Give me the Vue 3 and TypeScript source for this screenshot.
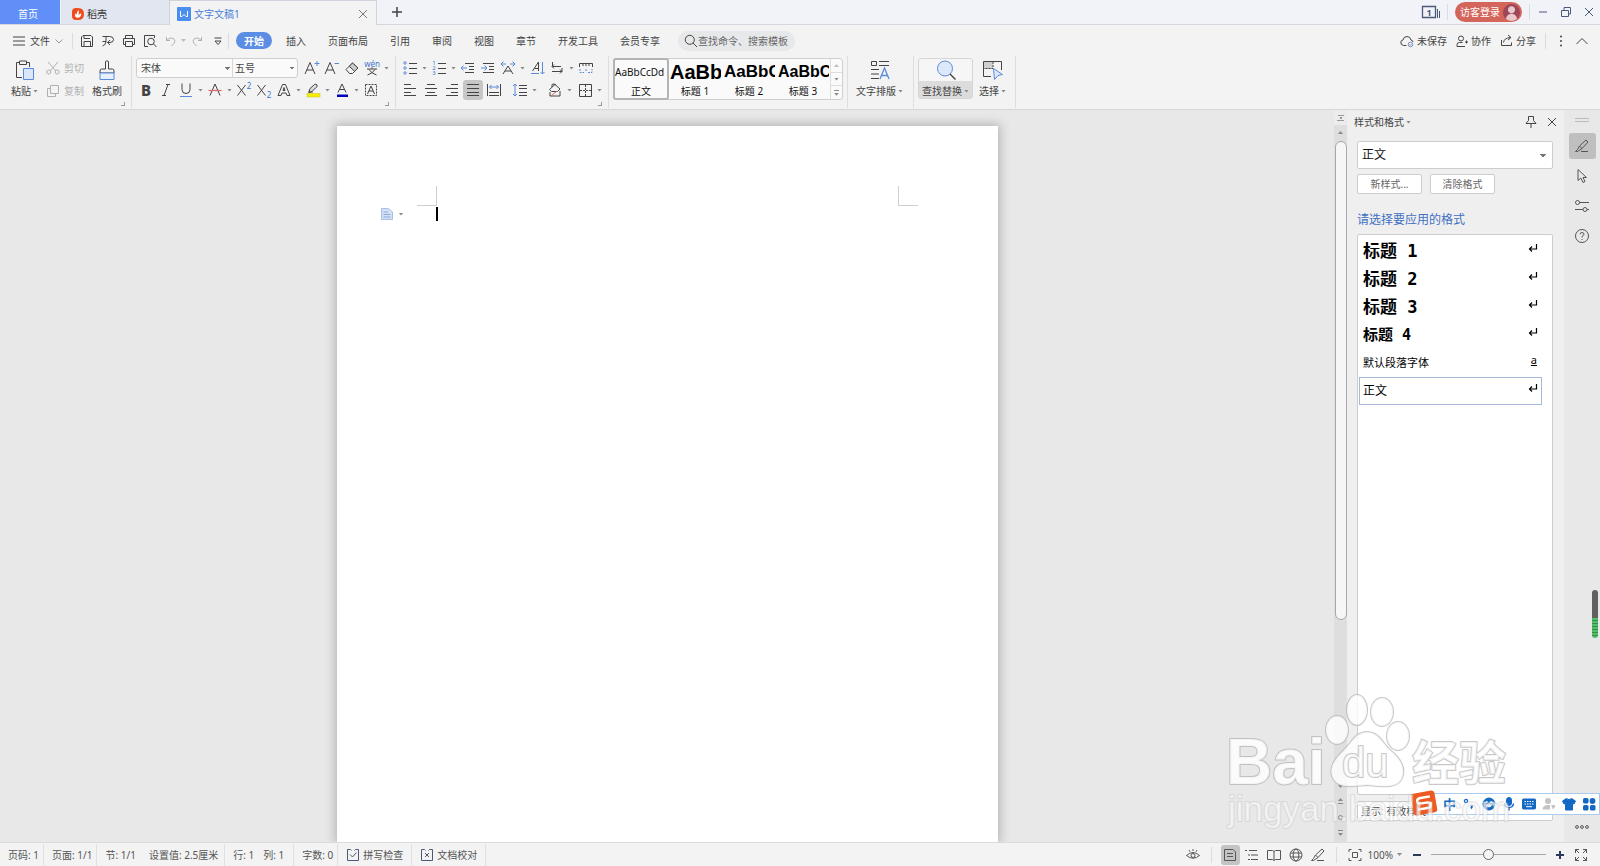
<script setup lang="ts">
import { h, ref } from 'vue'
import type { FunctionalComponent } from 'vue'

const B = '#5b8ad8'
const lines = (rows: Array<[number, number, number]>): string =>
  rows.map(([x1, x2, y]) => `<path d="M${x1} ${y}H${x2}"/>`).join('')
const letter = (t: string, x: number, y: number, size: number, extra = ''): string =>
  `<text x="${x}" y="${y}" font-size="${size}" stroke="none" fill="currentColor" text-anchor="middle" font-family="Noto Sans, sans-serif" ${extra}>${t}</text>`

// Every glyph is drawn in a square box: [box size, markup]
const icons: Record<string, [number, string]> = {
  docer: [12, `<path d="M0 4Q0 0 4 0H6Q12 0 12 6T6 12H4Q0 12 0 8Z" fill="#f04a1d" stroke="none"/><path d="M6.5 2Q4.5 4 4.6 6.5L3.4 5.2Q2 9.6 5.6 9.8Q9 9.6 9.4 5.4Q7.6 5.2 6.5 7Q7.4 4 6.5 2Z" fill="#fff" stroke="none"/>`],
  writer: [14, `<rect width="14" height="14" rx="1" fill="#4a8ef0" stroke="none"/><path d="M3.500 4V9.500H5L7 7.500L9 9.500H10.500V4" stroke="#fff"/>`],
  close: [12, `<path d="M2 2L10 10M10 2L2 10"/>`],
  plus: [12, `<path d="M6 1V11M1 6H11" stroke-width="1.5"/>`],
  minus: [12, `<path d="M2 6H10"/>`],
  restore: [12, `<path d="M1.5 4.5H8.5V10.5H1.5ZM4 4V1.5H10.5V8H9"/>`],
  windows: [18, `<path d="M.5 3.500H13.500V14.500H.5Z" stroke-width="1.300"/><path d="M15.500 6V15M17.500 8V15" />${letter('1', 7, 12.5, 9, 'font-weight="700"')}`],
  burger: [12, lines([[0, 12, 2], [0, 12, 6], [0, 12, 10]])],
  down: [8, `<path d="M.5 2.500L4 6L7.500 2.500"/>`],
  up: [12, `<path d="M.5 9L6 3.500L11.500 9"/>`],
  save: [14, `<path d="M1.500 12.500V3L3 1.500H11L12.500 3V12.500Z"/><path d="M4 1.500V4.500H10M4 12.500V7.500H10.500V12.500"/>`],
  output: [14, `<path d="M1.500 2.500H8.500Q12.500 2.500 12.500 5.500T9 8.500H6.500M9 6L6.500 8.500L9 11M5 3V7.500Q5 11 1.500 12M1.500 7.500H5"/>`],
  print: [14, `<path d="M3.500 4.500V1.500H10.500V4.500M3.500 10.500H1.500V4.500H12.500V10.500H10.500M3.500 7.500H10.500V12.500H3.500Z"/>`],
  preview: [14, `<path d="M5 12.500H1.500V1.500H11.500V4"/><circle cx="8" cy="7.500" r="3.300"/><path d="M10.500 10L13.500 13"/>`],
  undo: [12, `<path d="M1.500 2V5.500H5M1.500 5.500Q5 1.500 8.500 3.500Q11 5.500 9 8.500L6.500 11"/>`],
  redo: [12, `<path d="M10.500 2V5.500H7M10.500 5.500Q7 1.500 3.500 3.500Q1 5.500 3 8.500L5.500 11"/>`],
  more: [10, `<path d="M1.500 2H8.500M2 5H8L5 8.500Z"/>`],
  search: [14, `<circle cx="5.800" cy="5.800" r="4.500"/><path d="M9 9L13 13"/>`],
  cloud: [14, `<path d="M6.500 11.500H3.500Q.5 11 .8 8Q1.200 6 3 6Q3.500 2.500 7 2.500Q10.500 2.500 11 6Q13 6.500 13 8"/><circle cx="10.500" cy="10.500" r="2.300" stroke="#8090b8"/><path d="M9.500 10.500L10.300 11.300L11.600 9.900" stroke="#8090b8"/>`],
  people: [12, `<circle cx="5" cy="3.500" r="2.500"/><path d="M1 11.500V9.500Q1 7.500 3.500 7.500H6.500M1 11.500H9M10.500 5.500V8.500M9 7H12"/>`],
  share: [13, `<path d="M1.500 6V11.500H11.500V8.500M3.500 8.500Q4 4 10.500 3.500M8 1L11 3.500L8 6"/>`],
  dots: [12, `<g fill="currentColor" stroke="none"><circle cx="6" cy="1.500" r="1"/><circle cx="6" cy="6" r="1"/><circle cx="6" cy="10.500" r="1"/></g>`],
  paste: [20, `<path d="M7 17.500H1.500V2.500H4.500M11.500 2.500H14.500V7"/><path d="M4.500 1H11.500V4.500H4.500Z"/><path d="M8.500 8.500H18.500V19.500H8.500Z" fill="#d9e6fb" stroke="${B}"/>`],
  cut: [14, `<path d="M2 1L10 10M12 1L4 10"/><circle cx="2.800" cy="11" r="2"/><circle cx="11.200" cy="11" r="2"/>`],
  copy: [14, `<path d="M4.500 1.500H12.500V9.500H4.500ZM4 4.500H1.500V12.500H9.500V10"/>`],
  painter: [20, `<path d="M8.500 9V1.500Q10 0 11.500 1.500V9H15.500Q17 9 17 11V13H3V11Q3 9 4.500 9Z"/><path d="M3 13H17V19.500H3Z" stroke="${B}" fill="#e8f0fd"/>`],
  grow: [16, `<path d="M1 14L6 2.500L11 14M2.800 10H9.200"/><path d="M13 1V6M10.500 3.500H15.500" stroke="${B}"/>`],
  shrink: [16, `<path d="M1 14L6 2.500L11 14M2.800 10H9.200"/><path d="M10.500 3.500H15" stroke="${B}"/>`],
  eraser: [16, `<path d="M2 9.500L8.500 3L14 8L8.500 13.500H5.500Z"/><path d="M5.200 6.300L10.700 11.300L14 8L8.500 3Z" fill="#ccc"/>`],
  pinyin: [16, letter('wén', 8, 6.5, 8, 'style="fill:#3f74cc"') + `<path d="M3 9H13M8 7.500V9M5 9.500Q7 13 12.500 15M11 9.500Q9 13 3.500 15"/>`],
  bold: [16, letter('B', 8, 13.5, 15, 'font-weight="800"')],
  italic: [16, `<path d="M8 2.500H12M4 13.500H8M10 2.500L6 13.500"/>`],
  under: [16, `<path d="M4 1.500V7.500Q4 11.500 8 11.500T12 7.500V1.500"/><path d="M2 14.500H14" stroke="${B}"/>`],
  strike: [16, `<path d="M3 13.500L8 2L13 13.500"/><path d="M1.500 8.500H14.500" stroke="#e06a6a" stroke-width="1.300"/>`],
  sup: [16, `<path d="M1.500 3L9.500 13.500M9.500 3L1.500 13.500"/>` + letter('2', 13, 7, 8, 'style="fill:#3f74cc"')],
  sub: [16, `<path d="M1.500 3L9.500 13.500M9.500 3L1.500 13.500"/>` + letter('2', 13, 15.5, 8, 'style="fill:#3f74cc"')],
  outline: [16, `<path d="M2 13.500L6.500 2.500H9.500L14 13.500H11L10 11H6L5 13.500ZM7 8.500L8 5.500L9 8.500Z"/>`],
  mark: [16, `<path d="M4 10.500L5 6.500L9.500 2.500Q11 1.500 12 3T11 5.500L7 9.500Z" fill="#ddd"/><path d="M3 10H8"/><rect x="2" y="11.500" width="13" height="3.500" fill="#f7ee00" stroke="#c9c020" stroke-width=".5"/>`],
  color: [16, `<path d="M4 10.500L8 2L12 10.500M5.500 7.500H10.500"/><rect x="3" y="12.500" width="11" height="2.500" fill="#0000b8" stroke="none"/>`],
  boxed: [16, `<path d="M2.500 2.500H13.500V13.500H2.500Z" stroke-dasharray="2 1"/><path d="M4.500 12L8 4L11.500 12M6 9H10"/>`],
  bullets: [16, `<g stroke="${B}"><circle cx="3" cy="3" r="1.200"/><circle cx="3" cy="8" r="1.200"/><circle cx="3" cy="13" r="1.200"/></g>` + lines([[7, 15, 3.5], [7, 15, 8.5], [7, 15, 13.5]])],
  numbers: [16, [1, 2, 3].map((n) => letter(String(n), 3, n * 5, 6, 'style="fill:#3f74cc"')).join('') + lines([[7, 15, 3.5], [7, 15, 8.5], [7, 15, 13.5]])],
  outdent: [16, lines([[5, 14, 3.5], [9, 14, 6.5], [9, 14, 9.5], [5, 14, 12.5]]) + `<path d="M1 8H7M3.500 5.500L1 8L3.500 10.500" stroke="${B}"/>`],
  indent: [16, lines([[3, 14, 3.5], [9, 14, 6.5], [9, 14, 9.5], [3, 14, 12.5]]) + `<path d="M1 8H7M4.500 5.500L7 8L4.500 10.500" stroke="${B}"/>`],
  spread: [16, `<path d="M3 14L8 6L13 14M5 11H11"/><path d="M1 4H6M3.500 1.500L1 4L3.500 6.500M10 4H15M12.500 1.500L15 4L12.500 6.500" stroke="${B}"/>`],
  sort: [16, `<path d="M3.500 11L9.500 2V11M5.500 8.500H9.500"/><path d="M2 13.500H10M13.500 2V14M11.500 12L13.500 14L15.500 12" stroke="${B}"/>`],
  tabs: [16, `<path d="M3.500 2V6.500H12M5 4.500L3 6.500L5 8.500M3 11.500H13M11 9.500L13 11.500L11 13.500M13 8V11"/>`],
  ruler: [16, `<path d="M1.500 7V3.500H14.500V7M5 4V6M8 4V6M11 4V6"/><path d="M2 9V12.500H6M10 12.500H14V9M8 9V12" stroke="${B}" stroke-dasharray="2 1"/>`],
  left: [16, lines([[2, 9, 2.5], [2, 14, 6.5], [2, 9, 10.5], [2, 14, 13.5]])],
  center: [16, lines([[4, 12, 2.5], [2, 14, 6.5], [4, 12, 10.5], [2, 14, 13.5]])],
  right: [16, lines([[7, 14, 2.5], [2, 14, 6.5], [7, 14, 10.5], [2, 14, 13.5]])],
  justify: [16, lines([[2, 14, 2.5], [2, 14, 6.5], [2, 14, 10.5], [2, 14, 13.5]])],
  distribute: [16, `<path d="M1.500 2V14M14.500 2V14M3 10.500H13M3 13.500H13"/><path d="M3.500 5H12.500M5.500 3L3.500 5L5.500 7M10.500 3L12.500 5L10.500 7" stroke="${B}"/>`],
  spacing: [16, lines([[7, 15, 3.5], [7, 15, 6.5], [7, 15, 10.5], [7, 15, 13.5]]) + `<path d="M3 2V14M1 4L3 2L5 4M1 12L3 14L5 12" stroke="${B}"/>`],
  fill: [16, `<path d="M2.500 7.500L8 2.500L13 7L10.500 9.500H4.500ZM5 5V2.500Q7 1 9 3"/><path d="M3 10V14H13V9"/><path d="M4 14L10 9" stroke="#d66"/>`],
  border: [16, `<path d="M2.500 2.500H14.500V14.500H2.500Z"/><path d="M8.500 3V14M3 8.500H14" stroke-dasharray="2 1"/>`],
  typeset: [20, `<path d="M1.500 1.500H6.500V5.500H1.500ZM9 1.500H19M9 5.500H19M1 9.500H9M1 14H9M1 18.500H9"/><path d="M10 19L14.500 8L19 19M11.500 15.500H17.500" stroke="${B}" stroke-width="1.300"/>`],
  find: [20, `<circle cx="9" cy="8.500" r="7.500" fill="#dde9fb" stroke="${B}"/><path d="M14 14L19.500 19.500" stroke-width="1.400"/>`],
  select: [20, `<rect x="1" y="2" width="9" height="7" fill="#d0d0d0" stroke="none"/><path d="M8 16.500H.5V1.500H18.500V10"/><path d="M10 2V8.500H1" stroke-dasharray="2 1"/><path d="M10.500 8.500L19.500 14.500L15 15.500L11.500 19.500Z" fill="#dde9fb" stroke="${B}"/>`],
  pin: [14, `<path d="M4.500 1.500H9.500V5.500L12 8.500H2L4.500 5.500ZM7 8.500V13"/>`],
  pen: [16, `<path d="M3.500 11.500L5.500 8L12 2L14 4L8 10.500L3.500 13.500H1.500ZM7 13.500H14M5.500 8L8 10.500"/>`],
  cursor: [16, `<path d="M4 1.500V12.500L6.800 10L9 14.500L11 13.500L9 9.500H12.500Z"/>`],
  sliders: [16, `<circle cx="3.500" cy="4.500" r="2"/><path d="M5.500 4.500H15M1 11.500H9M13 11.500H15"/><circle cx="11" cy="11.500" r="2"/>`],
  help: [16, `<circle cx="8" cy="8" r="6.500"/><path d="M6 6.300Q6.200 4.500 8 4.500T10 6.200Q10 7.200 8 8.500V9.500M8 11V12"/>`],
  ellipsis: [16, `<circle cx="3" cy="8" r="1.400"/><circle cx="8" cy="8" r="1.400"/><circle cx="13" cy="8" r="1.400"/>`],
  grip: [14, lines([[0, 14, 5.5], [0, 14, 8.5]])],
  enter: [10, `<path d="M8.500 1V6H2M4 3.500L1.500 6L4 8.500" stroke-width="1.200"/>`],
  page: [12, `<path d="M.5.500H7.500L11.500 4V11.500H.5Z" fill="#d3e0f5" stroke="#a9bfe4"/><path d="M2.500 4H7M2.500 6.500H9.500M2.500 9H9.500" stroke="#8fabd9"/>`],
  check: [14, `<path d="M5.500 2.500L4.500 1.500H1.500V12.500H12.500V1.500H9.500L8.500 2.500M4 6.500L6.500 9L10.500 4.500" stroke="#4c5878"/>`],
  proof: [14, `<path d="M5.500 2.500L4.500 1.500H1.500V12.500H12.500V1.500H9.500L8.500 2.500M5 5L9 9M9 5L5 9" stroke="#4c5878"/>`],
  eye: [14, `<path d="M.5 7.500Q7 1.500 13.500 7.500Q7 13 .5 7.500ZM7 1V3M3 2L4 3.700M11 2L10 3.700"/><circle cx="7" cy="7.500" r="2"/>`],
  print1: [14, `<path d="M1.500 1.500H10L12.500 4V12.500H1.500ZM4 5.500H10M4 8.500H10"/>`],
  outline1: [14, lines([[0, 2, 2.5], [4, 12, 2.5], [3, 5, 7], [6, 13, 7], [3, 5, 11.5], [6, 13, 11.5]])],
  book: [14, `<path d="M.5 2.500H5.500L7 3.500L8.500 2.500H13.500V11.500H8.500L7 12.500L5.500 11.500H.5ZM7 3.500V12.500"/>`],
  globe: [14, `<circle cx="7" cy="7" r="6"/><ellipse cx="7" cy="7" rx="2.800" ry="6"/><path d="M1.500 5H12.500M1.500 9H12.500"/>`],
  fit: [14, `<path d="M1 4V1.500H3.500M10.500 1.500H13V4M13 10V12.500H10.500M3.500 12.500H1V10M4.500 4.500H9.500V9.500H4.500Z"/>`],
  full: [14, `<path d="M1.500 5V1.500H5M1.500 1.500L5 5M9 1.500H12.500V5M12.500 1.500L9 5M12.500 9V12.500H9M12.500 12.500L9 9M5 12.500H1.500V9M1.500 12.500L5 9"/>`],
  punct: [14, `<circle cx="4" cy="4" r="1.600" stroke-width="1.300"/><path d="M9.500 8.500Q10.500 10 9 11.500" stroke-width="2"/>`],
  smile: [14, `<circle cx="7" cy="7" r="6" fill="currentColor"/><path d="M3.500 7.500Q7 13 10.500 7.500Z" fill="#fff" stroke="none"/><circle cx="4.800" cy="5" r="1" fill="#fff" stroke="none"/><circle cx="9.200" cy="5" r="1" fill="#fff" stroke="none"/>`],
  mic: [14, `<rect x="4.500" y=".5" width="5" height="8" rx="2.500" fill="currentColor"/><path d="M2.500 6.500Q3 10.500 7 10.500T11.500 6.500M7 10.500V13.500" stroke-width="1.500"/>`],
  keyboard: [14, `<rect x=".5" y="2" width="13" height="10" rx="1" fill="currentColor"/><path d="M2.500 4.500H11.500M2.500 7H11.500" stroke="#fff" stroke-dasharray="1.500 1"/><path d="M4 9.700H10" stroke="#fff"/>`],
  person: [14, `<circle cx="6" cy="4" r="3" fill="currentColor" stroke="none"/><path d="M.5 12.500Q.5 8 6 8H8V12.500ZM9 8H13V10L11 12.500" fill="currentColor" stroke="none"/>`],
  shirt: [14, `<path d="M4.500 1.500Q7 4 9.500 1.500L13.500 4L12 7L10.500 6.500V13H3.500V6.500L2 7L.5 4Z" fill="currentColor"/>`],
  grid: [14, `<g fill="currentColor" stroke="none"><rect x="1" y="1" width="5.500" height="5.500" rx="1.500"/><circle cx="10.500" cy="4" r="2.900"/><rect x="1" y="8" width="5.500" height="5.500" rx="1.500"/><rect x="8" y="8" width="5.500" height="5.500" rx="1.500"/></g>`],
  sogou: [26, `<g transform="rotate(-10 13 13)"><rect x="1" y="2" width="24" height="22" rx="3" fill="#ee5a24" stroke="none"/><path d="M20 7.500H10.500Q6.500 7.500 6.500 10.200T10.500 13H15.500Q19.500 13 19.500 15.800T15.500 18.500H6" stroke="#fff" stroke-width="2.400"/></g>`],
}

const Ic: FunctionalComponent<{ n: string }> = (props) => {
  const [size, body] = icons[props.n]
  return h('svg', {
    width: size,
    height: size,
    viewBox: `0 0 ${size} ${size}`,
    fill: 'none',
    stroke: 'currentColor',
    'aria-hidden': 'true',
    innerHTML: body,
  })
}
Ic.props = ['n']

interface Tool { n: string; label: string; arrow?: boolean; on?: boolean; sep?: boolean }

const quick: Tool[] = [
  { n: 'save', label: '保存' },
  { n: 'output', label: '输出' },
  { n: 'print', label: '打印' },
  { n: 'preview', label: '打印预览' },
]
const menus = ['插入', '页面布局', '引用', '审阅', '视图', '章节', '开发工具', '会员专享']
const fontTop: Tool[] = [
  { n: 'grow', label: '增大字号' },
  { n: 'shrink', label: '减小字号' },
  { n: 'eraser', label: '清除格式' },
  { n: 'pinyin', label: '拼音指南', arrow: true },
]
const fontBottom: Tool[] = [
  { n: 'bold', label: '加粗' },
  { n: 'italic', label: '倾斜' },
  { n: 'under', label: '下划线', arrow: true },
  { n: 'strike', label: '删除线', arrow: true },
  { n: 'sup', label: '上标' },
  { n: 'sub', label: '下标' },
  { n: 'outline', label: '文字效果', arrow: true },
  { n: 'mark', label: '突出显示', arrow: true },
  { n: 'color', label: '字体颜色', arrow: true },
  { n: 'boxed', label: '字符底纹' },
]
const paraTop: Tool[] = [
  { n: 'bullets', label: '项目符号', arrow: true },
  { n: 'numbers', label: '编号', arrow: true },
  { n: 'outdent', label: '减少缩进量' },
  { n: 'indent', label: '增加缩进量' },
  { n: 'spread', label: '中文版式', arrow: true },
  { n: 'sort', label: '排序' },
  { n: 'tabs', label: '显示编辑标记', arrow: true },
  { n: 'ruler', label: '制表位' },
]
const paraBottom: Tool[] = [
  { n: 'left', label: '左对齐' },
  { n: 'center', label: '居中对齐' },
  { n: 'right', label: '右对齐' },
  { n: 'justify', label: '两端对齐', on: true },
  { n: 'distribute', label: '分散对齐' },
  { n: 'spacing', label: '行距', arrow: true, sep: true },
  { n: 'fill', label: '底纹颜色', arrow: true, sep: true },
  { n: 'border', label: '边框', arrow: true },
]
const gallery = [
  { sample: 'AaBbCcDd', name: '正文', cls: 's0' },
  { sample: 'AaBb', name: '标题 1', cls: 's1' },
  { sample: 'AaBbC', name: '标题 2', cls: 's2' },
  { sample: 'AaBbCc', name: '标题 3', cls: 's3' },
]
const styles = [
  { name: '标题 1', cls: 'h1' },
  { name: '标题 2', cls: 'h1' },
  { name: '标题 3', cls: 'h1' },
  { name: '标题 4', cls: 'h4' },
  { name: '默认段落字体', cls: 'chr', char: true },
  { name: '正文', cls: 'body' },
]
const side = [
  { n: 'pen', label: '样式和格式' },
  { n: 'cursor', label: '选择' },
  { n: 'sliders', label: '属性' },
  { n: 'help', label: '帮助' },
]
const views = [
  { n: 'print1', label: '页面视图' },
  { n: 'outline1', label: '大纲' },
  { n: 'book', label: '阅读版式' },
  { n: 'globe', label: 'Web版式' },
  { n: 'pen', label: '写作模式' },
]
const ime = ['punct', 'smile', 'mic', 'keyboard', 'person', 'shirt', 'grid']
const picked = ref(5)
const zoom = ref(50)
</script>

<template>
  <div class="app">
    <header class="titlebar">
      <button class="tab home">首页</button>
      <button class="tab docer"><Ic n="docer" />稻壳</button>
      <div class="tab current">
        <Ic n="writer" /><span class="tab-name">文字文稿1</span>
        <button class="plain" aria-label="关闭文稿"><Ic n="close" /></button>
      </div>
      <button class="plain new" aria-label="新建"><Ic n="plus" /></button>
      <div class="window-tools">
        <button class="plain" aria-label="窗口列表"><Ic n="windows" /></button>
        <i class="vline"></i>
        <button class="login">访客登录<span class="avatar"></span></button>
        <i class="vline"></i>
        <button class="plain" aria-label="最小化"><Ic n="minus" /></button>
        <button class="plain" aria-label="还原"><Ic n="restore" /></button>
        <button class="plain" aria-label="关闭"><Ic n="close" /></button>
      </div>
    </header>

    <nav class="menubar">
      <button class="plain file"><Ic n="burger" />文件<Ic n="down" class="faint" /></button>
      <i class="vline"></i>
      <div class="quick">
        <button v-for="q in quick" :key="q.n" class="plain q" :aria-label="q.label"><Ic :n="q.n" /></button>
        <button class="plain q off" aria-label="撤销"><Ic n="undo" /></button>
        <i class="arrow off"></i>
        <button class="plain q off" aria-label="恢复"><Ic n="redo" /></button>
        <button class="plain q" aria-label="自定义"><Ic n="more" /></button>
      </div>
      <i class="vline"></i>
      <button class="start">开始</button>
      <div class="menus">
        <button v-for="m in menus" :key="m" class="plain">{{ m }}</button>
      </div>
      <label class="search"><Ic n="search" /><input type="text" placeholder="查找命令、搜索模板" aria-label="查找命令" /></label>
      <div class="menu-right">
        <button class="plain"><Ic n="cloud" />未保存</button>
        <button class="plain"><Ic n="people" />协作</button>
        <button class="plain"><Ic n="share" />分享</button>
        <i class="vline"></i>
        <button class="plain" aria-label="更多"><Ic n="dots" /></button>
        <button class="plain" aria-label="收起功能区"><Ic n="up" /></button>
      </div>
    </nav>

    <section class="ribbon">
      <div class="group clip">
        <button class="big"><Ic n="paste" /><span>粘贴<i class="arrow"></i></span></button>
        <div class="stack">
          <button class="plain off"><Ic n="cut" />剪切</button>
          <button class="plain off"><Ic n="copy" />复制</button>
        </div>
        <button class="big"><Ic n="painter" /><span>格式刷</span></button>
        <i class="corner"></i>
      </div>
      <div class="group font">
        <div class="row">
          <div class="combos">
            <select class="family" aria-label="字体"><option>宋体</option></select>
            <select class="size" aria-label="字号"><option>五号</option></select>
          </div>
          <button v-for="t in fontTop" :key="t.n" class="tool" :aria-label="t.label">
            <span class="face"><Ic :n="t.n" /></span><i v-if="t.arrow" class="arrow"></i>
          </button>
        </div>
        <div class="row">
          <button v-for="t in fontBottom" :key="t.n" class="tool" :aria-label="t.label">
            <span class="face"><Ic :n="t.n" /></span><i v-if="t.arrow" class="arrow"></i>
          </button>
        </div>
        <i class="corner"></i>
      </div>
      <div class="group para">
        <div class="row">
          <button v-for="t in paraTop" :key="t.n" class="tool" :aria-label="t.label">
            <span class="face"><Ic :n="t.n" /></span><i v-if="t.arrow" class="arrow"></i>
          </button>
        </div>
        <div class="row spaced">
          <template v-for="t in paraBottom" :key="t.n">
            <i v-if="t.sep" class="mini-sep"></i>
            <button class="tool" :class="{ on: t.on }" :aria-label="t.label">
              <span class="face"><Ic :n="t.n" /></span><i v-if="t.arrow" class="arrow"></i>
            </button>
          </template>
        </div>
        <i class="corner"></i>
      </div>
      <div class="group styles">
        <div class="gallery">
          <button v-for="(g, i) in gallery" :key="g.name" class="cell" :class="{ on: i === 0 }">
            <span class="sample" :class="g.cls">{{ g.sample }}</span><span class="cell-name">{{ g.name }}</span>
          </button>
          <div class="steps">
            <button aria-label="上一行"><i class="arrow flip off"></i></button>
            <button aria-label="下一行"><i class="arrow"></i></button>
            <button aria-label="全部样式"><i class="arrow barred"></i></button>
          </div>
        </div>
      </div>
      <div class="group typeset">
        <button class="big"><Ic n="typeset" /><span>文字排版<i class="arrow"></i></span></button>
      </div>
      <div class="group last">
        <button class="big find"><Ic n="find" /><span>查找替换<i class="arrow"></i></span></button>
        <button class="big"><Ic n="select" /><span>选择<i class="arrow"></i></span></button>
      </div>
    </section>

    <div class="work">
      <main class="canvas">
        <article class="sheet">
          <div class="marks"><i class="mark-left"></i><i class="mark-right"></i></div>
          <div class="line">
            <button class="plain para-tool" aria-label="段落布局"><Ic n="page" /><i class="arrow"></i></button>
            <i class="caret"></i>
          </div>
        </article>
      </main>
      <div class="scroll">
        <i class="ruler-toggle"></i>
        <i class="arrow flip"></i>
        <div class="track"><div class="thumb"></div></div>
        <i class="arrow"></i>
        <div class="nav-set"><i class="arrow flip barred"></i><i class="dot"></i><i class="arrow barred"></i></div>
      </div>
      <aside class="panel">
        <div class="panel-head">
          <span>样式和格式<i class="arrow"></i></span>
          <button class="plain" aria-label="固定"><Ic n="pin" /></button>
          <button class="plain" aria-label="关闭面板"><Ic n="close" /></button>
        </div>
        <select class="style-select" aria-label="当前样式"><option>正文</option></select>
        <div class="panel-buttons">
          <button>新样式...</button>
          <button>清除格式</button>
        </div>
        <h2>请选择要应用的格式</h2>
        <div class="list">
          <button
            v-for="(s, i) in styles"
            :key="s.name"
            :class="[s.cls, { picked: picked === i }]"
            @click="picked = i"
          >
            <span>{{ s.name }}</span>
            <u v-if="s.char">a</u>
            <Ic v-else n="enter" />
          </button>
        </div>
        <select class="show-select" aria-label="显示"><option>显示: 有效样式</option></select>
      </aside>
      <div class="side">
        <Ic n="grip" class="grip" />
        <button v-for="(s, i) in side" :key="s.n" :class="{ on: i === 0 }" :aria-label="s.label"><Ic :n="s.n" /></button>
        <button class="side-more" aria-label="更多"><Ic n="ellipsis" /></button>
      </div>
    </div>

    <footer class="status">
      <span class="st cut">页码: 1</span>
      <span class="st cut">页面: 1/1</span>
      <span class="st">节: 1/1</span>
      <span class="st cut setting">设置值: 2.5厘米</span>
      <span class="st near">行: 1</span>
      <span class="st col">列: 1</span>
      <span class="st cut">字数: 0</span>
      <button class="st cut"><Ic n="check" />拼写检查</button>
      <button class="st cut"><Ic n="proof" />文档校对</button>
      <div class="status-right">
        <button class="plain eye" aria-label="护眼模式"><Ic n="eye" /></button>
        <i class="vline"></i>
        <div class="views">
          <button v-for="(v, i) in views" :key="v.n" class="plain" :class="{ on: i === 0 }" :aria-label="v.label"><Ic :n="v.n" /></button>
        </div>
        <i class="vline"></i>
        <button class="plain fit" aria-label="适合页宽"><Ic n="fit" /></button>
        <button class="plain percent">100%<i class="arrow"></i></button>
        <button class="plain sign" aria-label="缩小"><svg width="10" height="10"><path d="M1 5H9" stroke="currentColor" stroke-width="2" /></svg></button>
        <input v-model="zoom" type="range" min="0" max="100" aria-label="显示比例" />
        <button class="plain sign" aria-label="放大"><svg width="10" height="10"><path d="M1 5H9M5 1V9" stroke="currentColor" stroke-width="2" /></svg></button>
        <button class="plain" aria-label="全屏"><Ic n="full" /></button>
      </div>
    </footer>

    <div class="meter"></div>
    <div class="ime">
      <Ic n="sogou" class="ime-logo" />
      <b>中</b>
      <Ic v-for="i in ime" :key="i" :n="i" :class="{ grey: i === 'person' }" />
    </div>
    <svg class="watermark" width="300" height="150" viewBox="0 0 300 150" aria-hidden="true">
      <g class="wm">
        <text x="6" y="94" class="wm-bai">Bai</text>
        <ellipse cx="117" cy="40" rx="11" ry="14" />
        <ellipse cx="137" cy="20" rx="10" ry="15" />
        <ellipse cx="162" cy="22" rx="11" ry="14" />
        <ellipse cx="178" cy="46" rx="11" ry="14" />
        <path d="M147 42C158 42 162 52 170 60C180 68 186 78 182 88C178 98 166 97 147 95C128 97 116 98 112 86C109 76 116 68 124 60C132 52 136 42 147 42Z" />
        <text x="122" y="87" class="wm-du">du</text>
        <text x="192" y="90" class="wm-cn">经验</text>
        <text x="8" y="131" class="wm-url">jingyan.baidu.com</text>
      </g>
    </svg>
  </div>
</template>

<style>
html,
body {
  margin: 0;
  overflow: hidden;
}
</style>

<style scoped>
.app {
  position: relative;
  display: flex;
  flex-direction: column;
  height: 100vh;
  background: #f3f3f3;
  color: #444;
  font: 10px/14px 'Noto Sans', 'Noto Sans CJK SC', sans-serif;
}
.app *,
.app *::before,
.app *::after {
  box-sizing: border-box;
}
button,
select,
input {
  margin: 0;
  padding: 0;
  border: 0;
  background: none;
  color: inherit;
  font: inherit;
  white-space: nowrap;
}
select {
  appearance: none;
  background-image: conic-gradient(from -45deg at 50% 100%, #777 90deg, transparent 0);
  background-repeat: no-repeat;
  background-size: 6px 3px;
  background-position: right 2px center;
}
svg {
  flex: none;
  overflow: visible;
}
.plain {
  display: flex;
  align-items: center;
  justify-content: center;
}
.vline {
  flex: none;
  width: 1px;
  height: 16px;
  background: #dcdcdc;
}
.arrow {
  flex: none;
  display: inline-block;
  width: 9px;
  height: 3px;
}
.arrow::before {
  content: '';
  display: block;
  width: 5px;
  height: 3px;
  margin: 0 auto;
  background: #8a8a8a;
  clip-path: polygon(0 0, 100% 0, 50% 100%);
}
.arrow.flip::before {
  transform: rotate(180deg);
}
.arrow.barred {
  width: 5px;
  height: 6px;
  padding-top: 2px;
  border-top: 1px solid #8a8a8a;
}
.arrow.flip.barred {
  padding-top: 0;
  border-top: 0;
  border-bottom: 1px solid #8a8a8a;
}
.off {
  color: #b0b0b0;
}
.arrow.off {
  opacity: 0.5;
}

.titlebar {
  flex: none;
  display: flex;
  align-items: center;
  height: 25px;
  background: #f1f3f9;
  border-bottom: 1px solid #d4d7de;
}
.tab {
  display: flex;
  align-items: center;
  height: 24px;
}
.home {
  width: 60px;
  padding: 3px 4px 0 0;
  justify-content: center;
  background: #5f8ff7;
  color: #fff;
}
.docer {
  width: 108px;
  margin-left: 1px;
  padding: 3px 0 0 11px;
  gap: 3px;
  background: #e2e6f0;
  color: #333;
}
.current {
  align-self: flex-start;
  width: 208px;
  height: 25px;
  padding: 2px 7px 0;
  gap: 3px;
  background: #f3f3f3;
  border: 1px solid #cfd3dc;
  border-bottom: 0;
  color: #4a80d8;
}
.tab-name {
  flex: 1;
}
.current .plain {
  color: #777;
}
.new {
  margin-left: 14px;
}
.window-tools {
  display: flex;
  align-items: center;
  gap: 11px;
  margin-left: auto;
  padding-right: 5px;
  color: #4c5878;
}
.window-tools .vline {
  margin: 0 -4px;
}
.login {
  display: flex;
  align-items: center;
  gap: 3px;
  height: 20px;
  padding: 0 2px 0 5px;
  border-radius: 10px;
  background: #d4655b;
  color: #fff;
}
.avatar {
  width: 17px;
  height: 17px;
  border-radius: 50%;
  background:
    radial-gradient(circle at 50% 34%, #e8c8cc 3px, transparent 4px),
    radial-gradient(circle at 50% 90%, #e8c8cc 5px, transparent 6px),
    #9c4658;
}

.menubar {
  flex: none;
  display: flex;
  align-items: center;
  height: 31px;
  padding: 0 6px 0 13px;
}
.file {
  gap: 5px;
  width: 59px;
  justify-content: flex-start;
}
.faint {
  color: #999;
}
.quick {
  display: flex;
  align-items: center;
  padding-left: 3px;
}
.quick .q {
  width: 21px;
  height: 20px;
}
.quick .arrow {
  width: 5px;
}
.start {
  width: 36px;
  height: 17px;
  margin-left: 7px;
  border-radius: 9px;
  background: #5b8de4;
  color: #fff;
  font-weight: 700;
}
.menus {
  display: flex;
  gap: 22px;
  padding-left: 14px;
}
.search {
  display: flex;
  align-items: center;
  width: 117px;
  height: 20px;
  margin-left: 18px;
  padding: 0 6px;
  border-radius: 10px;
  background: #e7e8ea;
}
.search input {
  flex: 1;
  min-width: 0;
  outline: 0;
}
.search input::placeholder {
  color: #666;
  opacity: 1;
}
.menu-right {
  display: flex;
  align-items: center;
  gap: 9px;
  margin-left: auto;
  padding-right: 6px;
}
.menu-right .plain {
  gap: 3px;
}

.ribbon {
  flex: none;
  display: flex;
  height: 54px;
  border-bottom: 1px solid #d6d6d6;
}
.group {
  position: relative;
  display: flex;
  padding: 2px 4px 0;
  height: 52px;
  border-right: 1px solid #dedede;
}
.corner {
  position: absolute;
  right: 6px;
  bottom: 2px;
  width: 4px;
  height: 4px;
  border: solid #999;
  border-width: 0 1px 1px 0;
}
.big {
  display: flex;
  flex-direction: column;
  align-items: center;
  justify-content: space-between;
  height: 40px;
  padding-top: 2px;
}
.big span {
  display: flex;
  align-items: center;
}
.big .arrow {
  margin-right: -2px;
}
.clip {
  width: 132px;
  padding-left: 11px;
}
.stack {
  display: flex;
  flex-direction: column;
  justify-content: space-between;
  height: 40px;
  padding: 3px 8px 0;
}
.stack .plain {
  gap: 4px;
}
.font,
.para {
  flex-direction: column;
  gap: 2px;
}
.font {
  width: 264px;
}
.para {
  width: 213px;
}
.row {
  display: flex;
  align-items: center;
  height: 20px;
}
.spaced {
  gap: 1px;
}
.tool {
  display: flex;
  align-items: center;
}
.face {
  display: flex;
  align-items: center;
  justify-content: center;
  width: 20px;
  height: 20px;
  border-radius: 3px;
}
.on > .face {
  background: #c6c6c6;
}
.mini-sep {
  width: 1px;
  height: 16px;
  margin: 0 2px;
  background: #dedede;
}
.combos {
  display: flex;
  width: 162px;
  height: 20px;
  margin-right: 4px;
  border: 1px solid #cfcfcf;
  border-radius: 3px;
  background: #fafafa;
}
.family {
  width: 96px;
  padding-left: 4px;
  border-right: 1px solid #d8d8d8;
}
.size {
  flex: 1;
  padding-left: 2px;
}
.styles {
  width: 239px;
}
.gallery {
  display: flex;
  width: 231px;
  height: 42px;
  border: 1px solid #cfcfcf;
  border-radius: 3px;
  background: #fafafa;
}
.cell {
  display: flex;
  flex-direction: column;
  align-items: stretch;
  width: 54px;
  padding: 0 1px;
  color: #111;
}
.cell.on {
  outline: 2px solid #b4b4b4;
  outline-offset: -1px;
  border-radius: 2px;
}
.sample {
  height: 26px;
  overflow: hidden;
  text-align: left;
  line-height: 26px;
}
.cell-name {
  text-align: center;
  line-height: 12px;
}
.s1,
.s2,
.s3 {
  margin-left: 1px;
  color: #000;
  font-family: 'Liberation Sans', Arial, sans-serif;
  font-weight: 700;
}
.s1 {
  font-size: 20px;
}
.s2 {
  font-size: 17px;
}
.s3 {
  font-size: 16px;
}
.steps {
  display: flex;
  flex-direction: column;
  flex: 1;
  border-left: 1px solid #ddd;
}
.steps button {
  flex: 1;
  display: flex;
  align-items: center;
  justify-content: center;
}
.steps button + button {
  border-top: 1px solid #ddd;
}
.typeset {
  width: 66px;
  padding-left: 8px;
}
.last {
  width: 102px;
  padding-left: 4px;
  gap: 6px;
}
.find {
  width: 55px;
  height: 41px;
  padding-top: 1px;
  border: 1px solid #d6d6d6;
  border-radius: 3px;
  background: linear-gradient(#f6f6f6 22px, #dcdcdc 22px);
}

.work {
  flex: 1;
  display: flex;
  min-height: 0;
  background: #e8e8e8;
}
.canvas {
  flex: 1;
  display: flex;
  justify-content: center;
  padding-top: 16px;
  overflow: hidden;
}
.sheet {
  width: 661px;
  padding: 60px 80px 0;
  background: #fff;
  box-shadow: 0 0 10px 2px #b4b4b4;
}
.marks {
  display: flex;
  justify-content: space-between;
}
.marks i {
  width: 20px;
  height: 20px;
  border-bottom: 1px solid #cfcfcf;
}
.mark-left {
  border-right: 1px solid #cfcfcf;
}
.mark-right {
  border-left: 1px solid #cfcfcf;
}
.line {
  display: flex;
  align-items: center;
  gap: 30px;
  margin-left: -36px;
  padding-top: 1px;
}
.para-tool {
  gap: 4px;
}
.caret {
  width: 2px;
  height: 14px;
  background: #000;
}
.scroll {
  display: flex;
  flex-direction: column;
  align-items: center;
  width: 13px;
  padding-bottom: 6px;
  background: #dedede;
}
.ruler-toggle {
  width: 100%;
  height: 15px;
  margin-bottom: 6px;
  background:
    linear-gradient(#999, #999) center 5px / 6px 1px no-repeat,
    linear-gradient(#999, #999) center 7px / 2px 2px no-repeat,
    linear-gradient(#999, #999) center 10px / 7px 1px no-repeat,
    #ececec;
}
.track {
  flex: 1;
  width: 12px;
  margin: 7px 0 6px;
}
.thumb {
  height: 75%;
  border: 1px solid #a8a8a8;
  border-radius: 6px;
  background: #f6f6f6;
}
.nav-set {
  display: flex;
  flex-direction: column;
  align-items: center;
  justify-content: space-between;
  height: 38px;
  margin-top: 10px;
}
.dot {
  width: 5px;
  height: 5px;
  border: 1px solid #888;
  border-radius: 50%;
}
.panel {
  display: flex;
  flex-direction: column;
  width: 217px;
  padding: 3px 11px 21px 10px;
  background: #efefef;
}
.panel-head {
  display: flex;
  align-items: center;
  gap: 8px;
  height: 18px;
  margin: 0 -5px 10px -3px;
}
.panel-head span {
  flex: 1;
  display: flex;
  align-items: center;
}
.style-select,
.show-select,
.list,
.panel-buttons button {
  border: 1px solid #cdcdcd;
  border-radius: 2px;
  background-color: #fff;
}
.style-select {
  height: 28px;
  padding-left: 4px;
  background-position: right 6px center;
  color: #111;
  font-size: 12px;
}
.panel-buttons {
  display: flex;
  gap: 8px;
  padding-top: 5px;
}
.panel-buttons button {
  width: 65px;
  height: 20px;
  color: #666;
}
.panel h2 {
  margin: 17px 0 5px;
  color: #3f6fc4;
  font-size: 12px;
  font-weight: 400;
  line-height: 18px;
}
.list {
  flex: 1;
  display: flex;
  flex-direction: column;
  padding: 2px 10px 0 1px;
}
.list button {
  flex: none;
  display: flex;
  align-items: center;
  justify-content: space-between;
  height: 28px;
  padding: 0 3px;
  border: 1px solid transparent;
  color: #000;
}
.list svg,
.list u {
  margin-bottom: 6px;
}
.list u {
  padding-right: 1px;
}
.list .h1,
.list .h4 {
  font-family: 'DejaVu Sans Mono', 'Noto Sans CJK SC', monospace;
  font-weight: 700;
}
.list .h1 {
  font-size: 17px;
}
.list .h4 {
  font-size: 15px;
}
.list .chr {
  font-size: 11px;
}
.list .body {
  font-size: 12px;
}
.list .picked {
  border-color: #a5bad6;
}
.show-select {
  height: 20px;
  margin-top: 6px;
  padding-left: 3px;
}
.side {
  display: flex;
  flex-direction: column;
  align-items: center;
  gap: 4px;
  width: 36px;
  padding-bottom: 7px;
  background: #e8e8e8;
}
.grip {
  margin: 3px 0 2px;
  color: #bbb;
}
.side button {
  display: flex;
  align-items: center;
  justify-content: center;
  width: 27px;
  height: 26px;
  border-radius: 3px;
  color: #555;
}
.side .on {
  background: #bfbfbf;
}
.side .side-more {
  height: 16px;
  margin-top: auto;
}

.status {
  flex: none;
  display: flex;
  align-items: center;
  height: 24px;
  border-top: 1px solid #dcdcdc;
  color: #555;
}
.st {
  display: flex;
  align-items: center;
  gap: 3px;
  height: 22px;
  padding: 0 4px 0 8px;
}
.st.cut {
  border-right: 1px solid #e0e0e0;
}
.st + .st:not(.cut) {
  padding-right: 5px;
}
.st.setting {
  padding-right: 6px;
}
.st + .st.near {
  padding-right: 1px;
}
.st + .st.col {
  padding-right: 9px;
  border-right: 1px solid #e0e0e0;
}
button.st {
  padding: 0 8px;
}
.status-right {
  display: flex;
  align-items: center;
  margin-left: auto;
  padding-right: 12px;
}
.eye {
  margin-right: 11px;
}
.views {
  display: flex;
  gap: 3px;
  padding: 0 8px 0 9px;
}
.views .plain {
  width: 19px;
  height: 20px;
  border-radius: 3px;
}
.views .on {
  background: #c4c4c4;
}
.fit {
  margin: 0 6px 0 11px;
}
.percent {
  gap: 2px;
  margin-right: 8px;
}
.sign {
  color: #2c3a5a;
}
.status-right input {
  appearance: none;
  width: 115px;
  height: 12px;
  margin: 0 9px;
  background: linear-gradient(#a8a8a8, #a8a8a8) center / 100% 1px no-repeat;
}
.status-right input::-webkit-slider-thumb {
  appearance: none;
  width: 11px;
  height: 11px;
  border: 1px solid #666;
  border-radius: 50%;
  background: #f6f6f6;
}
.sign + .plain {
  margin-left: 9px;
}

.meter {
  position: absolute;
  right: 2px;
  bottom: 228px;
  width: 6px;
  height: 48px;
  border-radius: 3px;
  background:
    repeating-linear-gradient(transparent 0 2px, #3d8a4d 2px 3px) 0 28px no-repeat,
    linear-gradient(#606060 28px, #4fc068 28px);
}
.ime {
  position: absolute;
  right: 0;
  bottom: 51px;
  display: flex;
  align-items: center;
  justify-content: flex-end;
  gap: 6px;
  width: 176px;
  height: 22px;
  padding-right: 3px;
  border: 1px solid #a9cbed;
  background: #fff;
  color: #1269c4;
}
.ime b {
  font-size: 13px;
}
.ime-logo {
  position: absolute;
  left: -14px;
  top: -4px;
}
.grey {
  color: #c4c4c4;
}
.watermark {
  position: absolute;
  right: 80px;
  bottom: 26px;
  pointer-events: none;
}
.wm {
  fill: rgba(255, 255, 255, 0.8);
  stroke: rgba(176, 176, 176, 0.7);
  stroke-width: 2px;
  paint-order: stroke;
  stroke-linejoin: round;
  font-family: 'Liberation Sans', 'Noto Sans CJK SC', sans-serif;
}
.wm-bai {
  font-size: 64px;
  font-weight: 700;
}
.wm-du {
  font-size: 42px;
}
.wm-cn {
  font-size: 47px;
  font-weight: 700;
}
.wm-url {
  font-size: 35px;
  fill: rgba(255, 255, 255, 0.6);
  stroke: rgba(190, 190, 190, 0.4);
}
</style>
